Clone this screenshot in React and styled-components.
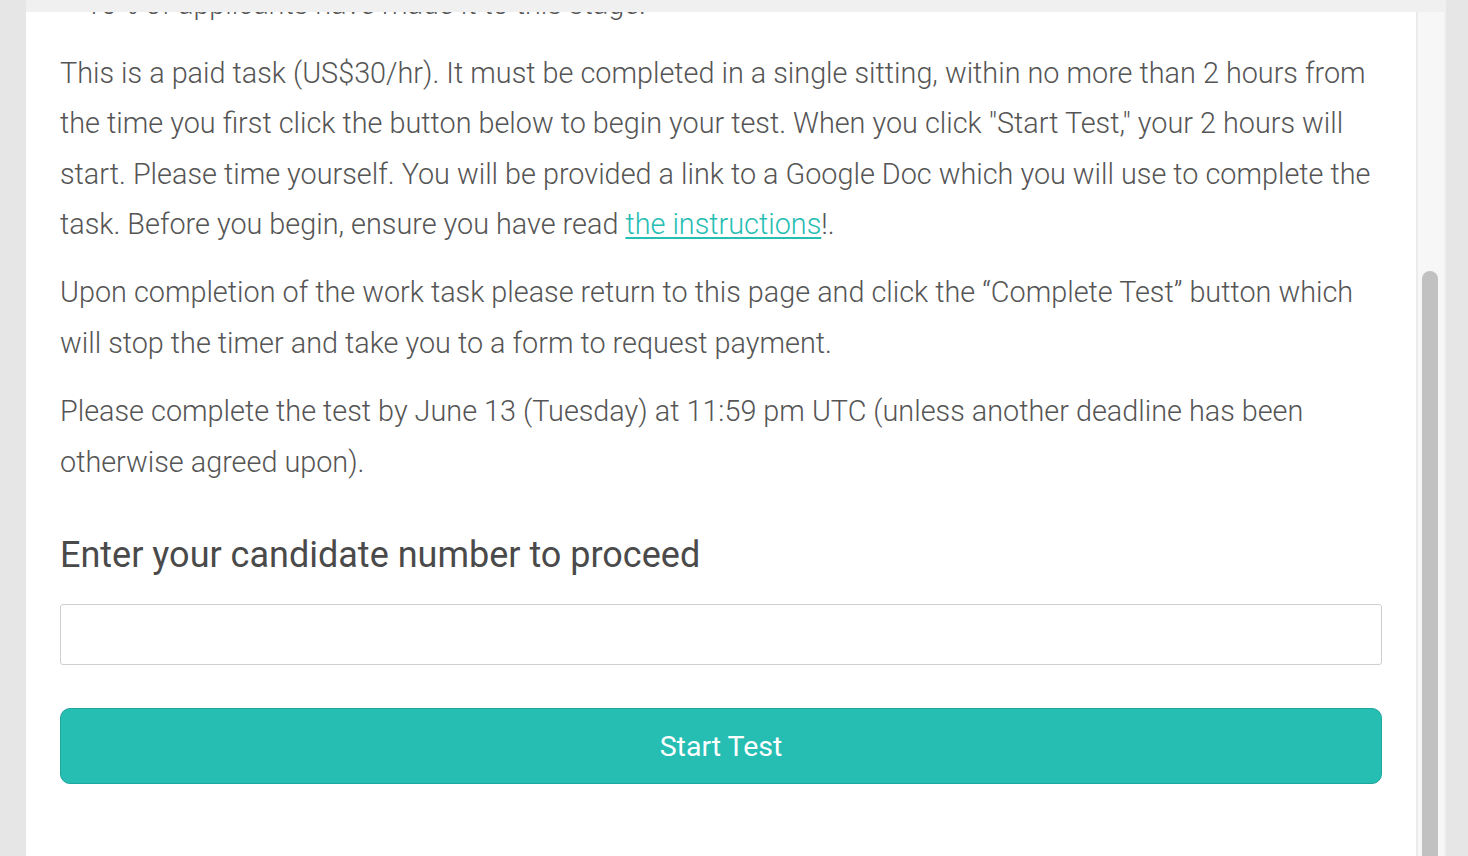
import React from "react"
import styled, { createGlobalStyle } from "styled-components"

const GlobalStyle = createGlobalStyle`
  html, body {
    margin: 0;
    height: 100%;
    overflow: hidden;
  }
  body {
    background: #e6e6e6;
    font-family: Roboto, "Liberation Sans", sans-serif;
  }
  #root {
    height: 100%;
  }
`

const Page = styled.div`
  height: 100vh;
  box-sizing: border-box;
  padding: 0 22px 0 26px;
  display: flex;
  flex-direction: column;
`

const TopBar = styled.div`
  height: 12px;
  flex-shrink: 0;
  background: #f0f0f0;
`

const Frame = styled.div`
  flex: 1;
  min-height: 0;
  display: flex;
`

const Content = styled.main`
  flex: 1;
  min-width: 0;
  background: #fff;
  overflow: hidden;
  display: flex;
  flex-direction: column;
  justify-content: flex-end;
  padding: 0 34px 72px;
  color: #555;
  & > * {
    flex-shrink: 0;
  }
`

const List = styled.ul`
  margin: 0 0 18px;
  padding-left: 25px;
  list-style: none;
`

const Item = styled.li`
  font-size: 28.8px;
  font-weight: 300;
  line-height: 50.4px;
`

const Para = styled.p`
  margin: 0 0 18px;
  font-size: 28.8px;
  font-weight: 300;
  line-height: 50.4px;
  &:last-of-type {
    margin-bottom: 0;
  }
`

const Link = styled.a`
  color: #26bdb3;
  text-decoration: underline;
  text-underline-offset: 3px;
`

const Heading = styled.h2`
  margin: 48px 0 29px;
  font-size: 36px;
  font-weight: 400;
  line-height: 40px;
  color: #4a4a4a;
`

const Input = styled.input`
  display: block;
  box-sizing: border-box;
  width: 100%;
  height: 61px;
  border: 1px solid #cfcfcf;
  border-radius: 3px;
  padding: 0 16px;
  font-size: 24px;
  font-family: inherit;
  outline: none;
`

const Button = styled.button`
  margin-top: 43px;
  height: 76px;
  width: 100%;
  border: 1px solid #1fa69d;
  border-radius: 10px;
  background: #26bdb3;
  color: #fff;
  font-family: inherit;
  font-size: 28.5px;
  font-weight: 400;
  cursor: pointer;
`

const Track = styled.div`
  width: 26px;
  flex-shrink: 0;
  background: #f7f7f7;
  border-left: 2px solid #ebebeb;
  border-right: 2px solid #f0f0f0;
  display: flex;
  flex-direction: column;
  align-items: center;
`

const Thumb = styled.div`
  margin-top: ${(p) => p.$offset}px;
  margin-left: -2px;
  width: 16px;
  flex: 1;
  background: #c1c1c1;
  border-radius: 8px 8px 0 0;
`

export default function App() {
  return (
    <>
      <GlobalStyle />
      <Page>
        <TopBar />
        <Frame>
          <Content>
            <List>
              <Item>10% of applicants have made it to this stage.</Item>
            </List>
            <Para>
              This is a paid task (US$30/hr). It must be completed in a single sitting, within no more
              than 2 hours from the time you first click the button below to begin your test. When you
              click "Start Test," your 2 hours will start. Please time yourself. You will be provided a
              link to a Google Doc which you will use to complete the task. Before you begin, ensure you
              have read <Link href="#">the instructions</Link>!.
            </Para>
            <Para>
              Upon completion of the work task please return to this page and click the “Complete Test”
              button which will stop the timer and take you to a form to request payment.
            </Para>
            <Para>
              Please complete the test by June 13 (Tuesday) at 11:59 pm UTC (unless another deadline has
              been otherwise agreed upon).
            </Para>
            <Heading>Enter your candidate number to proceed</Heading>
            <Input type="text" />
            <Button>Start Test</Button>
          </Content>
          <Track>
            <Thumb $offset={259} />
          </Track>
        </Frame>
      </Page>
    </>
  )
}
